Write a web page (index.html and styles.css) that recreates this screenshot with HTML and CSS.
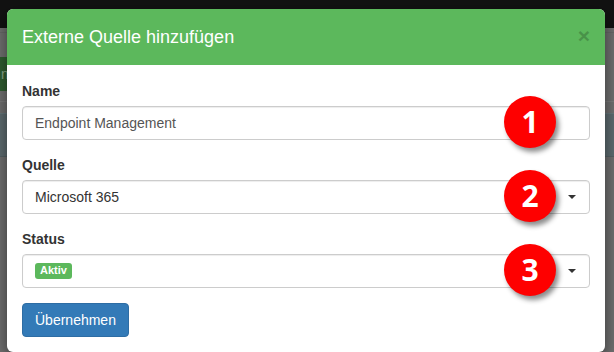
FILE: index.html
```html
<!DOCTYPE html>
<html lang="de">
<head>
    <meta charset="UTF-8">
    <title>Externe Quelle hinzufügen</title>
    <link rel="stylesheet" href="styles.css">
</head>
<body>
    <div class="page">
        <div class="topbar"></div>
        <div class="backdrop">
            <div class="bg-line"></div>
            <div class="bg-row">
                <div class="bg-btn">n</div>
            </div>
            <div class="bg-sep"></div>
            <div class="bg-band"></div>
        </div>
    </div>

    <div class="modal">
        <div class="modal-header">
            <span class="close">&times;</span>
            <h4 class="modal-title">Externe Quelle hinzufügen</h4>
        </div>
        <div class="modal-body">
            <div class="form-group">
                <label>Name</label>
                <div class="field">
                    <div class="form-control">Endpoint Management</div>
                    <span class="step">1</span>
                </div>
            </div>
            <div class="form-group">
                <label>Quelle</label>
                <div class="field">
                    <div class="form-control select">Microsoft 365<span class="caret"></span></div>
                    <span class="step">2</span>
                </div>
            </div>
            <div class="form-group">
                <label>Status</label>
                <div class="field">
                    <div class="form-control select"><span class="label-success">Aktiv</span><span class="caret"></span></div>
                    <span class="step">3</span>
                </div>
            </div>
            <button class="btn-primary">Übernehmen</button>
        </div>
    </div>
</body>
</html>
```

FILE: styles.css
```css
*{
    margin: 0;
    padding: 0;
    box-sizing: border-box;
}
body{
    width: 614px;
    height: 352px;
    overflow: hidden;
    position: relative;
    font-family: "Liberation Sans", Arial, sans-serif;
    font-size: 14px;
    line-height: 20px;
    color: #333;
    background: #6f6f6f;
}
.topbar{
    height: 28px;
    background: #121212;
}
.backdrop{
    display: flex;
    flex-direction: column;
}
.bg-line{
    height: 1px;
    margin-top: 4px;
    background: #676767;
}
.bg-row{
    margin-top: 24px;
    height: 34px;
}
.bg-btn{
    width: 9px;
    height: 34px;
    background: #2f5d30;
    color: #8aa88a;
    font-size: 14px;
    line-height: 34px;
    padding-left: 1px;
    overflow: hidden;
}
.bg-sep{
    height: 1px;
    margin-top: 10px;
    background: #7a7a7a;
}
.bg-band{
    height: 44px;
    margin-top: 11px;
    background: #5d6b6f;
    border-top: 1px solid #66777b;
    border-bottom: 1px solid #546164;
}
.modal{
    position: absolute;
    left: 7px;
    top: 9px;
    width: 598px;
    background: #fff;
    border-radius: 6px;
    box-shadow: 0 5px 15px rgba(0,0,0,.5);
}
.modal-header{
    background: #5cb85c;
    padding: 15px;
    border-radius: 6px 6px 0 0;
    color: #fff;
}
.modal-title{
    font-size: 18px;
    font-weight: normal;
    line-height: 26px;
}
.close{
    float: right;
    font-size: 21px;
    font-weight: bold;
    line-height: 1;
    margin-top: 1px;
    color: #000;
    opacity: .2;
}
.modal-body{
    padding: 16px 15px 15px;
}
.form-group{
    margin-bottom: 15px;
}
.form-group label{
    display: block;
    font-weight: bold;
    margin-bottom: 5px;
}
.field{
    position: relative;
}
.form-control{
    height: 34px;
    padding: 6px 12px;
    border: 1px solid #ccc;
    border-radius: 4px;
    color: #555;
    box-shadow: inset 0 1px 1px rgba(0,0,0,.075);
}
.select{
    color: #333;
    display: flex;
    align-items: center;
}
.caret{
    margin-left: auto;
    margin-right: 1px;
    width: 0;
    height: 0;
    border-top: 4px solid #333;
    border-left: 4px solid transparent;
    border-right: 4px solid transparent;
}
.label-success{
    background: #5cb85c;
    color: #fff;
    font-size: 11px;
    font-weight: bold;
    line-height: 1;
    padding: 2px 5px 3px;
    border-radius: 3px;
}
.step{
    position: absolute;
    right: 34px;
    top: 50%;
    margin-top: -27px;
    width: 52px;
    height: 52px;
    border-radius: 50%;
    background: #fe0000;
    color: #fff;
    font-family: "Open Sans", "DejaVu Sans", sans-serif;
    font-weight: bold;
    font-size: 30px;
    line-height: 52px;
    text-align: center;
    box-shadow: 3px 4px 5px rgba(0,0,0,.45);
}
.btn-primary{
    background: #337ab7;
    border: 1px solid #2e6da4;
    border-radius: 4px;
    color: #fff;
    font-family: "Liberation Sans", Arial, sans-serif;
    font-size: 14px;
    line-height: 20px;
    padding: 6px 12px;
}
```
